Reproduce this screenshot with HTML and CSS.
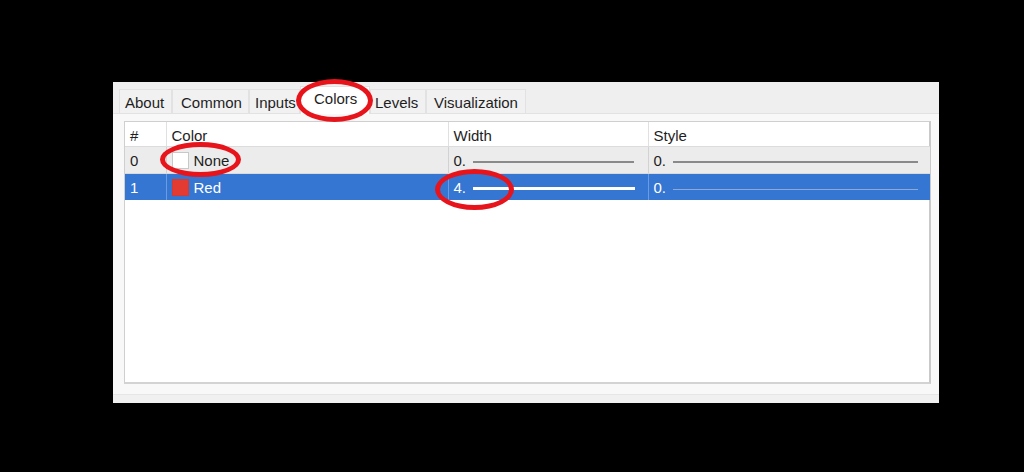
FILE: index.html
```html
<!DOCTYPE html>
<html lang="en">
  <head>
    <meta charset="UTF-8" />
    <title>Plot Properties - Colors</title>
    <link rel="stylesheet" href="styles.css">
  </head>
  <body>
    <main class="dialog">
      <nav class="tabs">
        <span class="tab">About</span>
        <span class="tab">Common</span>
        <span class="tab">Inputs</span>
        <span class="tab active">Colors</span>
        <span class="tab">Levels</span>
        <span class="tab">Visualization</span>
      </nav>
      <section class="content">
        <div class="grid-box">
          <table class="colors">
            <colgroup>
              <col class="c-num" />
              <col class="c-color" />
              <col class="c-width" />
              <col class="c-style" />
            </colgroup>
            <thead>
              <tr>
                <th>#</th>
                <th>Color</th>
                <th>Width</th>
                <th>Style</th>
              </tr>
            </thead>
            <tbody>
              <tr class="row">
                <td>0</td>
                <td><span class="swatch white"></span>None</td>
                <td><span class="val">0.</span><span class="line thin"></span></td>
                <td><span class="val">0.</span><span class="line thin"></span></td>
              </tr>
              <tr class="row selected">
                <td>1</td>
                <td><span class="swatch red"></span>Red</td>
                <td><span class="val">4.</span><span class="line thick"></span></td>
                <td><span class="val">0.</span><span class="line faint"></span></td>
              </tr>
            </tbody>
          </table>
        </div>
      </section>
      <footer class="status"></footer>
    </main>

    <!-- red annotation circles drawn over the screenshot -->
    <div class="mark mark-tab"></div>
    <div class="mark mark-none"></div>
    <div class="mark mark-width"></div>
  </body>
</html>
```

FILE: styles.css
```css
* {
  box-sizing: border-box;
}

body {
  margin: 0;
  background: #000;
  font-family: "Liberation Sans", Arial, sans-serif;
  font-size: 15px;
  color: #1e1e1e;
  height: 472px;
  overflow: hidden;
  position: relative;
}

.dialog {
  margin: 82px 0 0 113px;
  width: 826px;
  height: 321px;
  background: #f8f8f8;
  display: flex;
  flex-direction: column;
}

/* Tabs */
.tabs {
  display: flex;
  align-items: flex-end;
  height: 32px;
  padding: 0 0 0 6px;
  background: #efefef;
  border-bottom: 1px solid #e2e2e2;
}
.tab {
  height: 24px;
  line-height: 25px;
  padding: 0 5px;
  background: #f1f1f1;
  border: 1px solid #e2e2e2;
  border-bottom: none;
}
.tab:nth-child(1) { width: 53px; }
.tab:nth-child(2) { width: 77px; padding-left: 8px; }
.tab:nth-child(3) { width: 51px; }
.tab:nth-child(4) { width: 70px; }
.tab:nth-child(5) { width: 56px; padding-left: 4px; }
.tab:nth-child(6) { width: 100px; padding-left: 7px; }
.tab.active {
  background: #fff;
  height: 28px;
  line-height: 24px;
  padding-left: 13px;
  margin-bottom: -1px;
}

/* Table area */
.content {
  flex: 1;
  padding: 7px 0 0 11px;
}
.grid-box {
  width: 807px;
  height: 263px;
  background: #fff;
  border: 1px solid #cfcfcf;
  border-right: 2px solid #c9c9c9;
  border-bottom: 2px solid #d3d3d3;
}
.colors {
  border-collapse: collapse;
  table-layout: fixed;
  width: 805px;
}
.c-num { width: 41px; }
.c-color { width: 282px; }
.c-width { width: 200px; }
.c-style { width: 282px; }

.colors th {
  height: 24px;
  text-align: left;
  font-weight: normal;
  padding: 3px 0 0 5px;
  border-right: 1px solid #e0e0e0;
  border-bottom: 1px solid #dcdcdc;
}
.colors th:last-child,
.colors td:last-child {
  border-right: none;
}
.colors td {
  height: 27px;
  padding: 2px 0 0 5px;
  border-right: 1px solid #d2d2d2;
  white-space: nowrap;
}
.row {
  background: #ececec;
}
.row td {
  border-bottom: 1px solid #dadada;
}
.row.selected {
  background: #3476d2;
  color: #fff;
}
.row.selected td {
  border-right-color: #6b9be0;
  border-bottom: none;
}

.swatch {
  display: inline-block;
  width: 17px;
  height: 17px;
  vertical-align: -3px;
  margin-right: 5px;
}
.swatch.white {
  background: #fff;
  border: 1px solid #c8c8c8;
}
.swatch.red {
  background: #e33a32;
  border: 1px solid #d23a34;
}

.val {
  display: inline-block;
  width: 19px;
}
.line {
  display: inline-block;
  vertical-align: 3px;
  height: 2px;
  background: #8a8a8a;
}
td:nth-child(3) .line { width: 161px; }
td:nth-child(4) .line { width: 245px; }
.line.thick {
  height: 3px;
  background: #fff;
  width: 162px !important;
}
.line.faint {
  height: 1px;
  background: #8ea9d3;
}

.status {
  height: 9px;
  background: #f0f0f0;
  border-top: 1px solid #e6e6e6;
}

/* annotations */
.mark {
  position: absolute;
  border: 5px solid #e8141c;
  border-radius: 50%;
}
.mark-tab {
  left: 296px;
  top: 79px;
  width: 77px;
  height: 43px;
}
.mark-none {
  left: 160px;
  top: 142px;
  width: 81px;
  height: 35px;
}
.mark-width {
  left: 435px;
  top: 169px;
  width: 79px;
  height: 41px;
}
```
